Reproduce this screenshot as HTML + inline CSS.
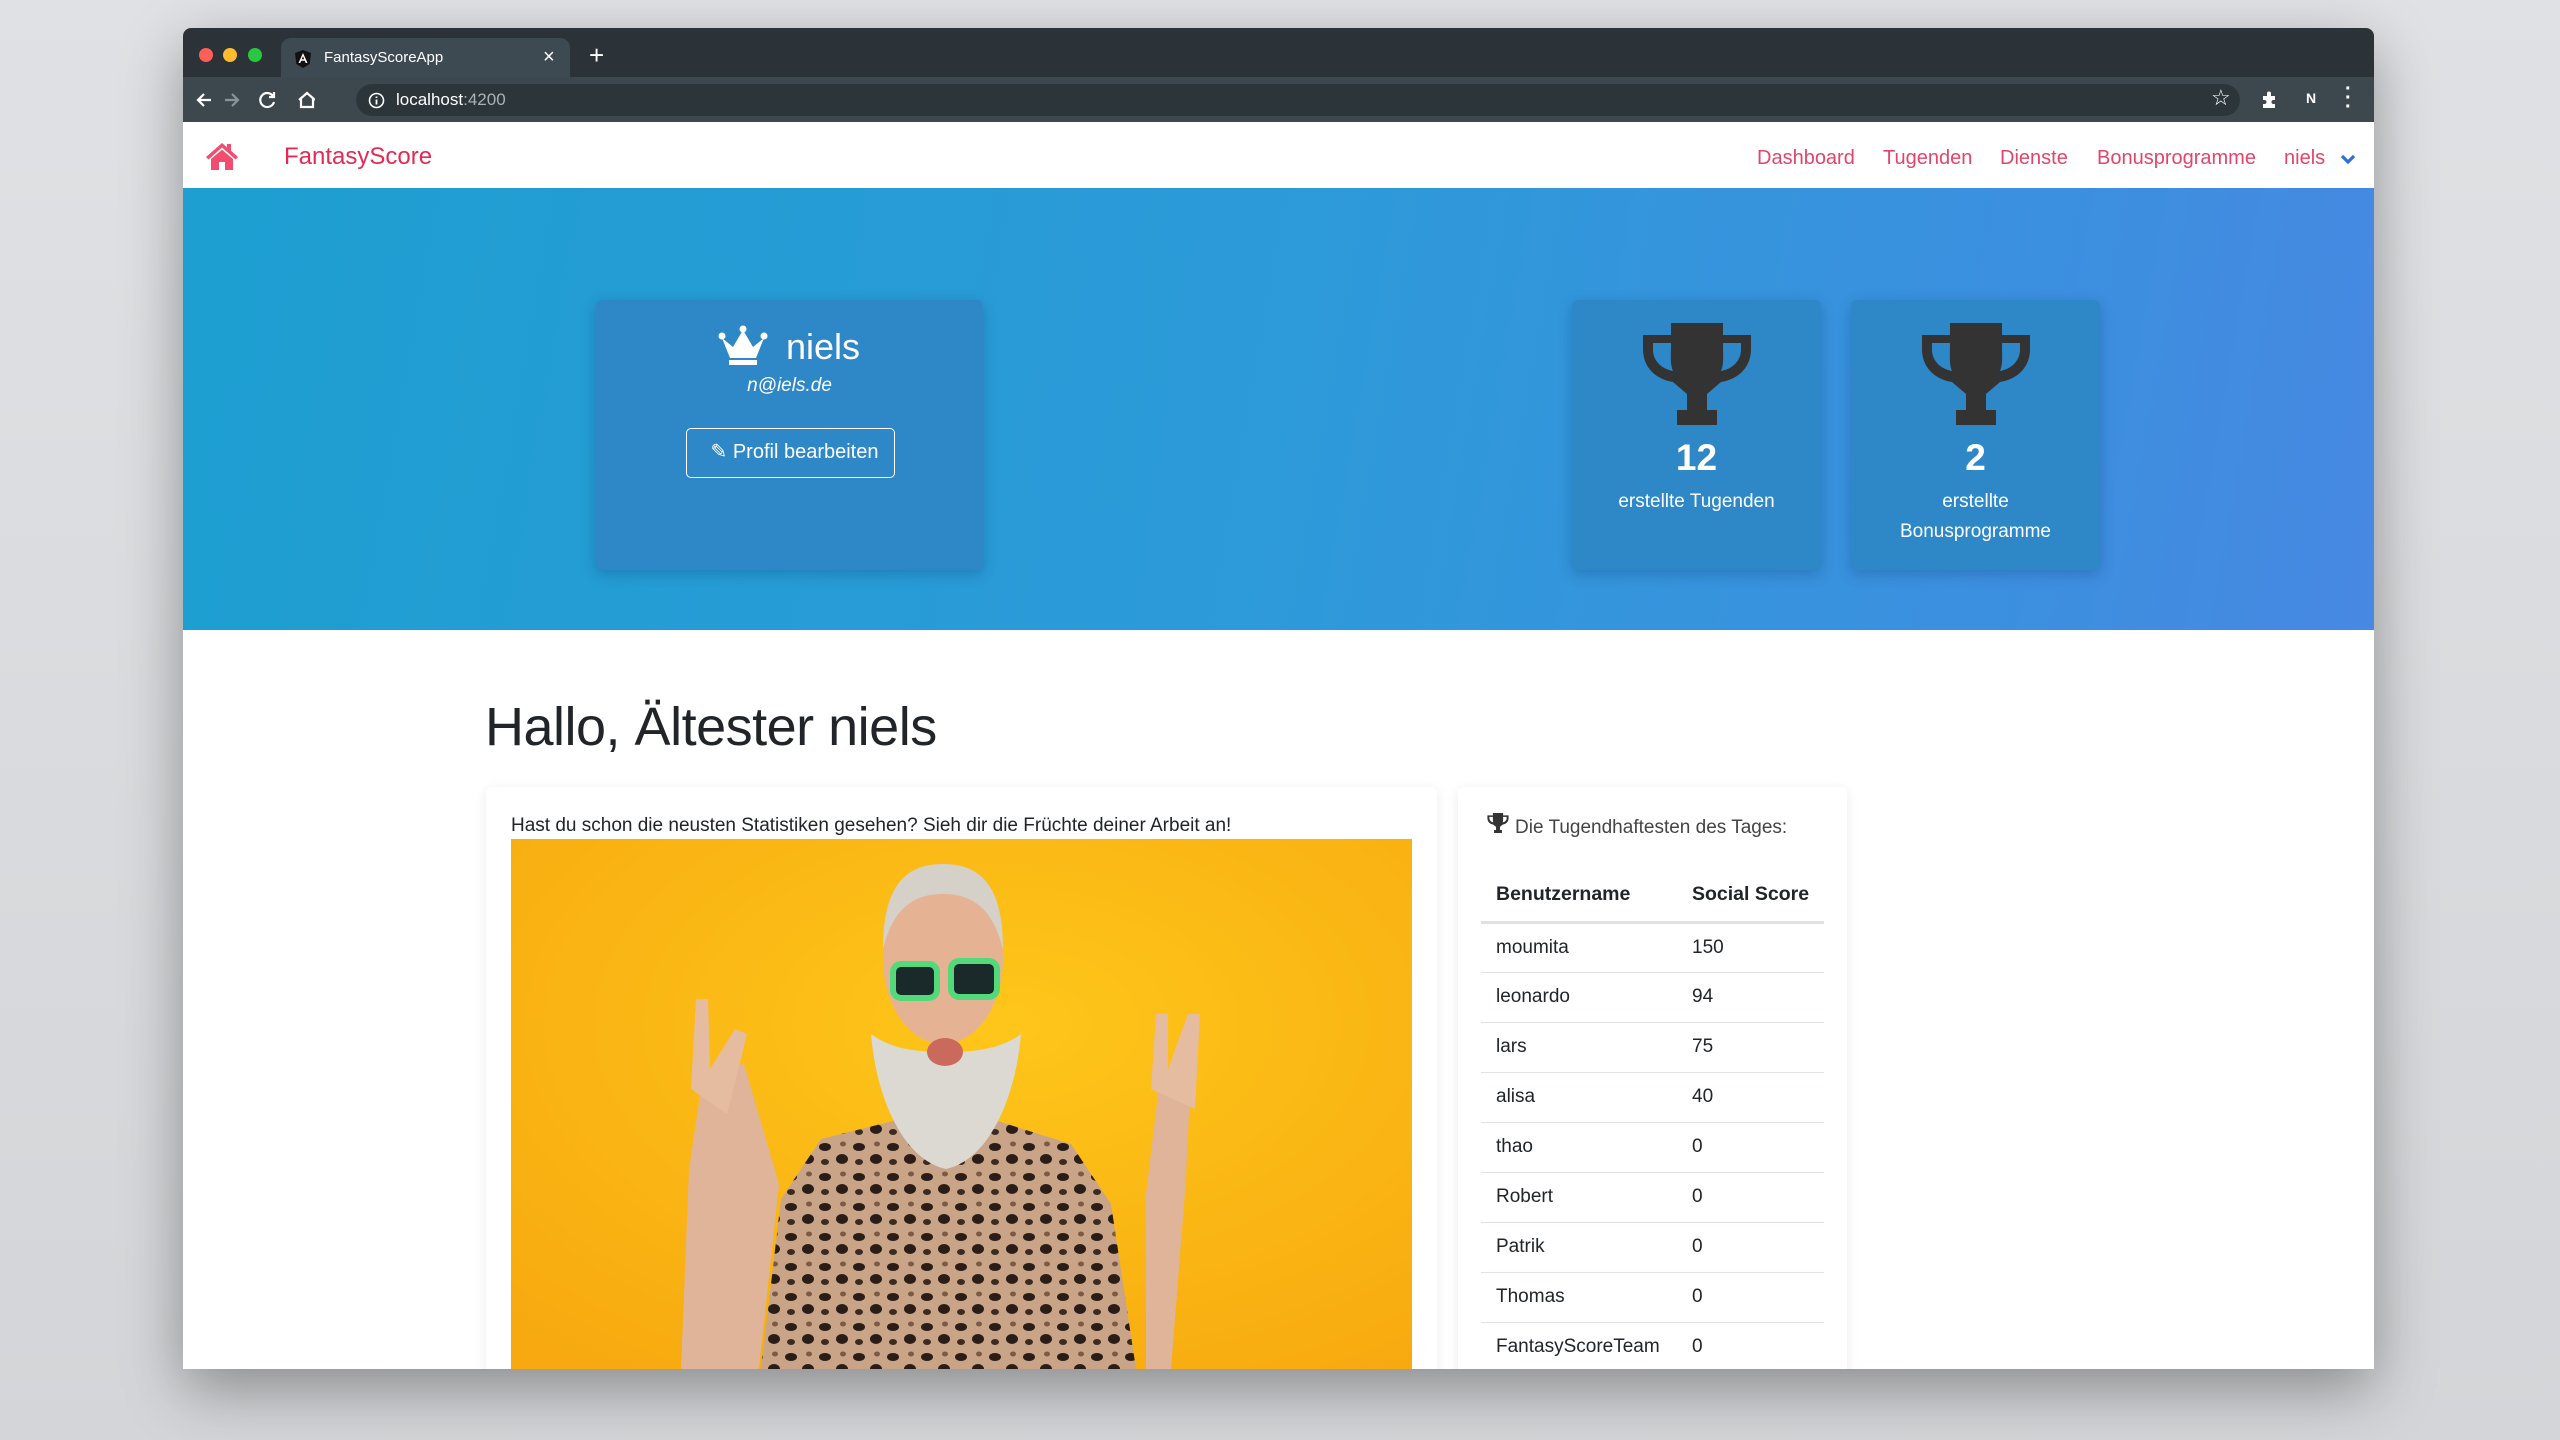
<!DOCTYPE html>
<html><head><meta charset="utf-8"><style>
*{margin:0;padding:0;box-sizing:border-box}
body{width:2560px;height:1440px;overflow:hidden;background:linear-gradient(180deg,#dfe1e4,#d3d5d8);font-family:"Liberation Sans",sans-serif;position:relative}
.win{position:absolute;left:183px;top:28px;width:2191px;height:1341px;background:#fff;box-shadow:0 20px 60px rgba(0,0,0,.35);overflow:hidden;border-radius:8px 8px 0 0}
.tabbar{position:absolute;left:0;top:0;width:100%;height:49px;background:#2b3338}
.dot{position:absolute;top:20px;width:14px;height:14px;border-radius:50%}
.tab{position:absolute;left:98px;top:10px;width:289px;height:41px;background:#3e4a51;border-radius:10px 10px 0 0;color:#fff;font-size:15px}
.toolbar{position:absolute;left:0;top:49px;width:100%;height:45px;background:#3d484e}
.omni{position:absolute;left:173px;top:7px;width:1884px;height:32px;background:#2c353a;border-radius:16px;color:#fff;font-size:17px}
.nav{position:absolute;left:0;top:94px;width:100%;height:66px;background:#fff}
.nav a{position:absolute;top:25px;color:#e2456a;font-size:20px;text-decoration:none}
.hero{position:absolute;left:0;top:160px;width:100%;height:442px;background:linear-gradient(100deg,#1d9fd1 0%,#2d9ad9 50%,#3d8fe0 85%,#4788e2 100%)}
.card{position:absolute;background:#2e87c7;border-radius:6px;box-shadow:0 4px 14px rgba(0,40,90,.25);color:#fff;text-align:center}
.wcard{position:absolute;background:#fff;border-radius:6px;box-shadow:0 2px 12px rgba(0,0,0,.08)}
table{border-collapse:collapse;font-size:19px;color:#212529}
td,th{text-align:left;padding:0 0 0 15px;height:50px;border-top:1.5px solid #dee2e6}
th{font-weight:bold;border-top:none;border-bottom:3px solid #dee2e6;height:54px;font-size:19.5px}
</style></head><body>
<div class="win">
 <div class="tabbar">
  <div class="dot" style="left:16px;background:#fe5f57"></div>
  <div class="dot" style="left:40px;background:#febc2e"></div>
  <div class="dot" style="left:65px;background:#28c840"></div>
  <div class="tab">
   <svg style="position:absolute;left:14px;top:12px" width="16" height="18" viewBox="0 0 16 18"><path d="M8 0L0 3l1.3 11L8 18l6.7-4L16 3z" fill="#111"/><path d="M8 3L3.5 13h1.8l.9-2.3h3.6l.9 2.3h1.8zM6.8 9.2L8 6.3l1.2 2.9z" fill="#fff"/></svg>
   <span style="position:absolute;left:43px;top:11px">FantasyScoreApp</span>
   <span style="position:absolute;left:262px;top:8px;font-size:20px">×</span>
  </div>
  <span style="position:absolute;left:406px;top:12px;color:#fff;font-size:26px">+</span>
 </div>
 <div class="toolbar">
  <svg style="position:absolute;left:12px;top:12px" width="120" height="22" viewBox="0 0 120 22" fill="none" stroke-width="2.2">
   <path d="M16 11H4M9 5l-6 6 6 6" stroke="#fff"/>
   <path d="M30 11h12M37 5l6 6-6 6" stroke="#8a9398"/>
   <path d="M78 7a7 7 0 1 0 1 6M79 3v5h-5" stroke="#fff"/>
   <path d="M104 11l8-7 8 7M106 10v8h12v-8" stroke="#fff"/>
  </svg>
  <div class="omni">
   <svg style="position:absolute;left:12px;top:8px" width="17" height="17" viewBox="0 0 17 17"><circle cx="8.5" cy="8.5" r="7" fill="none" stroke="#fff" stroke-width="1.6"/><path d="M8.5 7.5v5M8.5 4.5v1.5" stroke="#fff" stroke-width="1.8"/></svg>
   <span style="position:absolute;left:40px;top:6px">localhost<span style="color:#aab2b6">:4200</span></span>
  </div>
  <span style="position:absolute;left:2028px;top:8px;color:#fff;font-size:22px">☆</span>
  <svg style="position:absolute;left:2077px;top:13px" width="20" height="20" viewBox="0 0 20 20"><path d="M3 6h4V3.5a2 2 0 0 1 4 0V6h4v4h-1.5a2 2 0 0 0 0 4H15v4H3v-4h1.5a2 2 0 0 0 0-4H3z" fill="#fff"/></svg>
  <span style="position:absolute;left:2123px;top:13px;color:#fff;font-size:14px;font-weight:bold">N</span>
  <span style="position:absolute;left:2162px;top:8px;color:#fff;font-size:20px;font-weight:bold;line-height:9px">·<br>·<br>·</span>
 </div>
 <div class="nav">
  <svg style="position:absolute;left:22px;top:19px" width="34" height="30" viewBox="0 0 34 30"><path d="M17 2L1 16l2.5 2.5L17 6.5l13.5 12L33 16 26 9.8V3h-4v3.3z" fill="#f24d6e"/><path d="M6 18L17 8.8 28 18v11h-8v-8h-6v8H6z" fill="#f24d6e"/></svg>
  <a style="left:101px;top:21px;font-size:24px;color:#e22a54">FantasyScore</a>
  <a style="left:1574px">Dashboard</a>
  <a style="left:1700px">Tugenden</a>
  <a style="left:1817px">Dienste</a>
  <a style="left:1914px">Bonusprogramme</a>
  <a style="left:2101px">niels</a>
  <svg style="position:absolute;left:2157px;top:32px" width="16" height="11" viewBox="0 0 16 11"><path d="M2 2l6 6 6-6" fill="none" stroke="#2f6fdc" stroke-width="3.2"/></svg>
 </div>
 <div class="hero">
  <div class="card" style="left:413px;top:112px;width:387px;height:270px">
   <svg style="position:absolute;left:122px;top:25px" width="50" height="42" viewBox="0 0 50 42"><circle cx="25" cy="4" r="3.5" fill="#fff"/><circle cx="4" cy="11" r="3.5" fill="#fff"/><circle cx="46" cy="11" r="3.5" fill="#fff"/><path d="M4 13l8 20h26l8-20-11 9-10-17-10 17z" fill="#fff"/><rect x="11" y="35" width="28" height="5" fill="#fff"/></svg>
   <div style="position:absolute;left:190px;top:26px;font-size:36px">niels</div>
   <div style="position:absolute;left:0;width:100%;top:75px;font-size:19px;font-style:italic">n@iels.de</div>
   <div style="position:absolute;left:90px;top:128px;width:209px;height:50px;border:1.5px solid #fff;border-radius:5px;font-size:20px;line-height:46px;padding-left:8px">✎ Profil bearbeiten</div>
  </div>
  <div class="card" style="left:1389px;top:112px;width:249px;height:270px">
   <svg style="position:absolute;left:69px;top:23px" width="112" height="102" viewBox="0 0 112 102"><path d="M30 0h52v12h28v14c0 18-12 30-30 33l-14 12v16h10v15H36V87h10V71L32 59C14 56 2 44 2 26V12h28zM12 20v7c0 10 8 19 20 21-3-7-2-14-2-28zM100 20H82c0 14 1 21-2 28 12-2 20-11 20-21z" fill="#333" fill-rule="evenodd"/></svg>
   <div style="position:absolute;left:0;width:100%;top:137px;font-size:37px;font-weight:bold">12</div>
   <div style="position:absolute;left:0;width:100%;top:191px;font-size:19px">erstellte Tugenden</div>
  </div>
  <div class="card" style="left:1668px;top:112px;width:249px;height:270px">
   <svg style="position:absolute;left:69px;top:23px" width="112" height="102" viewBox="0 0 112 102"><path d="M30 0h52v12h28v14c0 18-12 30-30 33l-14 12v16h10v15H36V87h10V71L32 59C14 56 2 44 2 26V12h28zM12 20v7c0 10 8 19 20 21-3-7-2-14-2-28zM100 20H82c0 14 1 21-2 28 12-2 20-11 20-21z" fill="#333" fill-rule="evenodd"/></svg>
   <div style="position:absolute;left:0;width:100%;top:137px;font-size:37px;font-weight:bold">2</div>
   <div style="position:absolute;left:0;width:100%;top:187px;font-size:19px;line-height:30px">erstellte<br>Bonusprogramme</div>
  </div>
 </div>
 <div style="position:absolute;left:302px;top:668px;font-size:54px;color:#212529;letter-spacing:-0.5px">Hallo, Ältester niels</div>
 <div class="wcard" style="left:303px;top:759px;width:951px;height:640px">
  <div style="position:absolute;left:25px;top:28px;font-size:19px;color:#212529">Hast du schon die neusten Statistiken gesehen? Sieh dir die Früchte deiner Arbeit an!</div>
  <svg style="position:absolute;left:25px;top:52px" width="901" height="530" viewBox="0 0 901 530">
   <defs>
    <radialGradient id="bg" cx="0.55" cy="0.35" r="0.8"><stop offset="0" stop-color="#fec61a"/><stop offset="1" stop-color="#f7a90f"/></radialGradient>
    <pattern id="leo" width="34" height="30" patternUnits="userSpaceOnUse"><rect width="34" height="30" fill="#c9a486"/><ellipse cx="8" cy="8" rx="6" ry="4" fill="#2a1d18"/><ellipse cx="25" cy="20" rx="6" ry="5" fill="#2a1d18"/><ellipse cx="26" cy="5" rx="3" ry="2.5" fill="#7a5a45"/><ellipse cx="8" cy="23" rx="4" ry="3" fill="#3a2a22"/></pattern>
   </defs>
   <rect width="901" height="530" fill="url(#bg)"/>
   <path d="M250 530l20-170 40-60 80-20 90 0 80 25 40 60 25 165z" fill="url(#leo)"/>
   <path d="M170 530l8-200 15-100 40-5 35 120-20 185z" fill="#e0b498"/>
   <path d="M180 250l5-90 12 0 2 70 25-40 12 5-20 80z" fill="#e6bca0"/>
   <path d="M660 530l15-190 5-110 -30 0 -15 125 0 175z" fill="#e0b498"/>
   <path d="M640 250l5-75 12 0 0 55 20-55 12 0 -5 95z" fill="#e6bca0"/>
   <ellipse cx="432" cy="120" rx="60" ry="85" fill="#e6b294"/>
   <path d="M372 110c0-60 20-85 60-85s60 25 60 85c-10-40-30-55-60-55s-50 15-60 55z" fill="#d5d0c8"/>
   <path d="M360 195c5 60 30 125 75 135 45-10 70-75 75-135-20 15-45 18-75 18s-55-3-75-18z" fill="#dcd9d2"/>
   <ellipse cx="434" cy="213" rx="18" ry="14" fill="#c96a5c"/>
   <rect x="382" y="125" width="44" height="34" rx="8" fill="#1a2a2a" stroke="#54d97a" stroke-width="6"/>
   <rect x="440" y="122" width="46" height="36" rx="8" fill="#1a2a2a" stroke="#54d97a" stroke-width="6"/>
  </svg>
 </div>
 <div class="wcard" style="left:1275px;top:759px;width:389px;height:640px">
  <svg style="position:absolute;left:29px;top:26px" width="22" height="20" viewBox="0 0 112 102"><path d="M30 0h52v12h28v14c0 18-12 30-30 33l-14 12v16h10v15H36V87h10V71L32 59C14 56 2 44 2 26V12h28zM12 20v7c0 10 8 19 20 21-3-7-2-14-2-28zM100 20H82c0 14 1 21-2 28 12-2 20-11 20-21z" fill="#333" fill-rule="evenodd"/></svg>
  <div style="position:absolute;left:57px;top:30px;font-size:19px;color:#444">Die Tugendhaftesten des Tages:</div>
  <table style="position:absolute;left:23px;top:81px;width:343px">
   <tr><th style="width:196px">Benutzername</th><th>Social Score</th></tr>
   <tr><td>moumita</td><td>150</td></tr>
   <tr><td>leonardo</td><td>94</td></tr>
   <tr><td>lars</td><td>75</td></tr>
   <tr><td>alisa</td><td>40</td></tr>
   <tr><td>thao</td><td>0</td></tr>
   <tr><td>Robert</td><td>0</td></tr>
   <tr><td>Patrik</td><td>0</td></tr>
   <tr><td>Thomas</td><td>0</td></tr>
   <tr><td>FantasyScoreTeam</td><td>0</td></tr>
  </table>
 </div>
</div>
</body></html>
